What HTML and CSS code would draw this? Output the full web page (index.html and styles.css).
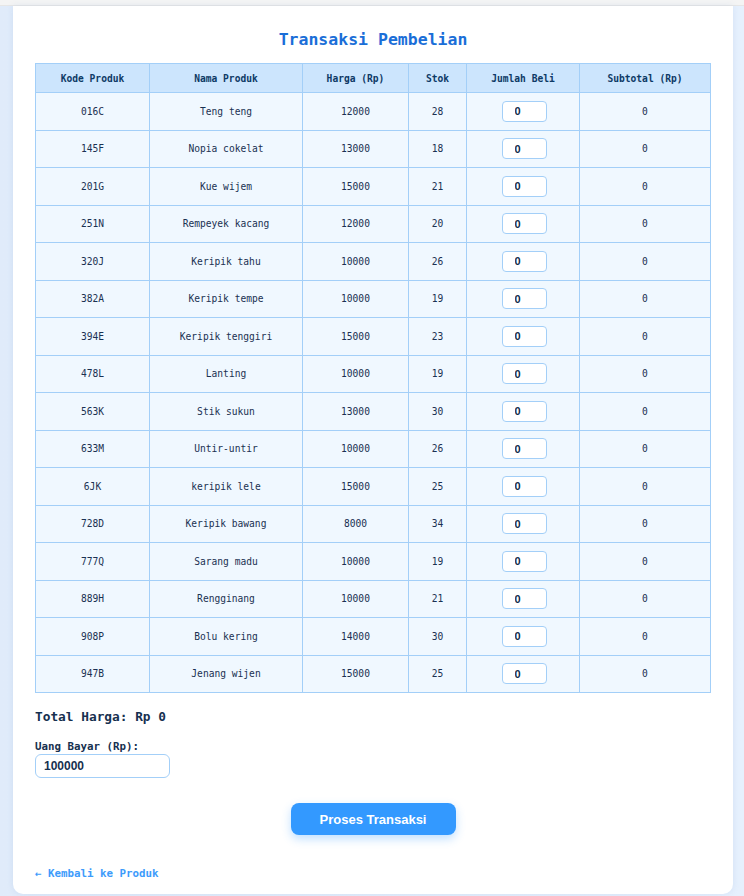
FILE: index.html
```html
<!DOCTYPE html>
<html>
<head>
<meta charset="utf-8">
<link rel="stylesheet" href="styles.css">
</head>
<body>
<div class="topbar"></div>
<div class="page">
  <div class="card">
    <h1 class="title">Transaksi Pembelian</h1>
    <table class="tbl">
      <thead>
        <tr>
          <th class="c1">Kode Produk</th>
          <th class="c2">Nama Produk</th>
          <th class="c3">Harga (Rp)</th>
          <th class="c4">Stok</th>
          <th class="c5">Jumlah Beli</th>
          <th class="c6">Subtotal (Rp)</th>
        </tr>
      </thead>
      <tbody>
        <tr><td>016C</td><td>Teng teng</td><td>12000</td><td>28</td><td><input class="qty" value="0"></td><td>0</td></tr>
        <tr><td>145F</td><td>Nopia cokelat</td><td>13000</td><td>18</td><td><input class="qty" value="0"></td><td>0</td></tr>
        <tr><td>201G</td><td>Kue wijem</td><td>15000</td><td>21</td><td><input class="qty" value="0"></td><td>0</td></tr>
        <tr><td>251N</td><td>Rempeyek kacang</td><td>12000</td><td>20</td><td><input class="qty" value="0"></td><td>0</td></tr>
        <tr><td>320J</td><td>Keripik tahu</td><td>10000</td><td>26</td><td><input class="qty" value="0"></td><td>0</td></tr>
        <tr><td>382A</td><td>Keripik tempe</td><td>10000</td><td>19</td><td><input class="qty" value="0"></td><td>0</td></tr>
        <tr><td>394E</td><td>Keripik tenggiri</td><td>15000</td><td>23</td><td><input class="qty" value="0"></td><td>0</td></tr>
        <tr><td>478L</td><td>Lanting</td><td>10000</td><td>19</td><td><input class="qty" value="0"></td><td>0</td></tr>
        <tr><td>563K</td><td>Stik sukun</td><td>13000</td><td>30</td><td><input class="qty" value="0"></td><td>0</td></tr>
        <tr><td>633M</td><td>Untir-untir</td><td>10000</td><td>26</td><td><input class="qty" value="0"></td><td>0</td></tr>
        <tr><td>6JK</td><td>keripik lele</td><td>15000</td><td>25</td><td><input class="qty" value="0"></td><td>0</td></tr>
        <tr><td>728D</td><td>Keripik bawang</td><td>8000</td><td>34</td><td><input class="qty" value="0"></td><td>0</td></tr>
        <tr><td>777Q</td><td>Sarang madu</td><td>10000</td><td>19</td><td><input class="qty" value="0"></td><td>0</td></tr>
        <tr><td>889H</td><td>Rengginang</td><td>10000</td><td>21</td><td><input class="qty" value="0"></td><td>0</td></tr>
        <tr><td>908P</td><td>Bolu kering</td><td>14000</td><td>30</td><td><input class="qty" value="0"></td><td>0</td></tr>
        <tr><td>947B</td><td>Jenang wijen</td><td>15000</td><td>25</td><td><input class="qty" value="0"></td><td>0</td></tr>
      </tbody>
    </table>
    <div class="total">Total Harga: Rp 0</div>
    <label class="pay-label">Uang Bayar (Rp):</label>
    <input class="pay" value="100000">
    <div class="actions"><button class="btn">Proses Transaksi</button></div>
    <a class="back" href="#">← Kembali ke Produk</a>
  </div>
</div>
</body>
</html>
```
FILE: styles.css
```css
html, body {
  margin: 0;
  padding: 0;
}
body {
  background: #e3eefc;
  font-family: "DejaVu Sans Mono", "Liberation Mono", monospace;
  color: #1d3557;
}
.topbar {
  height: 5px;
  background: #f4f4f4;
  border-bottom: 1px solid #e6e6e6;
}
.page {
  padding: 0 11px 0 13px;
  height: 890px;
  background: linear-gradient(90deg, #e0ebfa 0%, #e6f0fd 100%);
}
.card {
  background: #fff;
  height: 888px;
  box-sizing: border-box;
  padding: 0 22px;
  border-radius: 0 0 10px 10px;
  box-shadow: 0 0 6px rgba(120, 160, 210, 0.18);
}
.title {
  margin: 0;
  padding: 24px 0 0;
  height: 33px;
  text-align: center;
  font-size: 16.5px;
  font-weight: bold;
  color: #1a6ed8;
  line-height: 20px;
}
.tbl {
  width: 675px;
  border-collapse: collapse;
  table-layout: fixed;
  font-size: 9.6px;
  background: #f0f8ff;
}
.tbl th, .tbl td {
  border: 1px solid #a3cff8;
  text-align: center;
  padding: 0;
}
.tbl th {
  background: #cce5fd;
  height: 28px;
  font-weight: bold;
  color: #0e3a66;
}
.tbl td {
  height: 36.5px;
  color: #1a3152;
}
.c1 { width: 113px; }
.c2 { width: 152px; }
.c3 { width: 105px; }
.c4 { width: 57px; }
.c5 { width: 112px; }
.c6 { width: 130px; }
.qty {
  width: 45px;
  height: 21px;
  box-sizing: border-box;
  border: 1px solid #a3cff8;
  border-radius: 4px;
  background: #fff;
  padding: 0 0 0 12px;
  font-family: "Liberation Sans", Arial, sans-serif;
  font-weight: bold;
  font-size: 11px;
  color: #0e2a4a;
  vertical-align: middle;
  margin-left: 2px;
}
.total {
  margin-top: 16px;
  font-size: 12.8px;
  font-weight: bold;
  color: #16304f;
  line-height: 16px;
}
.pay-label {
  display: block;
  margin-top: 16px;
  font-size: 10.8px;
  font-weight: bold;
  color: #16304f;
  line-height: 12px;
}
.pay {
  display: block;
  margin-top: 1px;
  width: 135px;
  height: 24px;
  box-sizing: border-box;
  border: 1px solid #a3cff8;
  border-radius: 6px;
  padding: 0 0 0 8px;
  font-family: "Liberation Sans", Arial, sans-serif;
  font-weight: bold;
  font-size: 12px;
  color: #16304f;
  background: #fff;
}
.actions {
  display: flex;
  justify-content: center;
  margin-top: 25px;
}
.btn {
  width: 165px;
  height: 32px;
  border: none;
  border-radius: 8px;
  background: #3399ff;
  color: #fff;
  font-family: "Liberation Sans", Arial, sans-serif;
  font-weight: bold;
  font-size: 13px;
  box-shadow: 0 4px 10px rgba(51, 153, 255, 0.3);
}
.back {
  display: block;
  margin-top: 32px;
  font-size: 10.8px;
  font-weight: bold;
  color: #3d9bfb;
  text-decoration: none;
  line-height: 14px;
}
```
